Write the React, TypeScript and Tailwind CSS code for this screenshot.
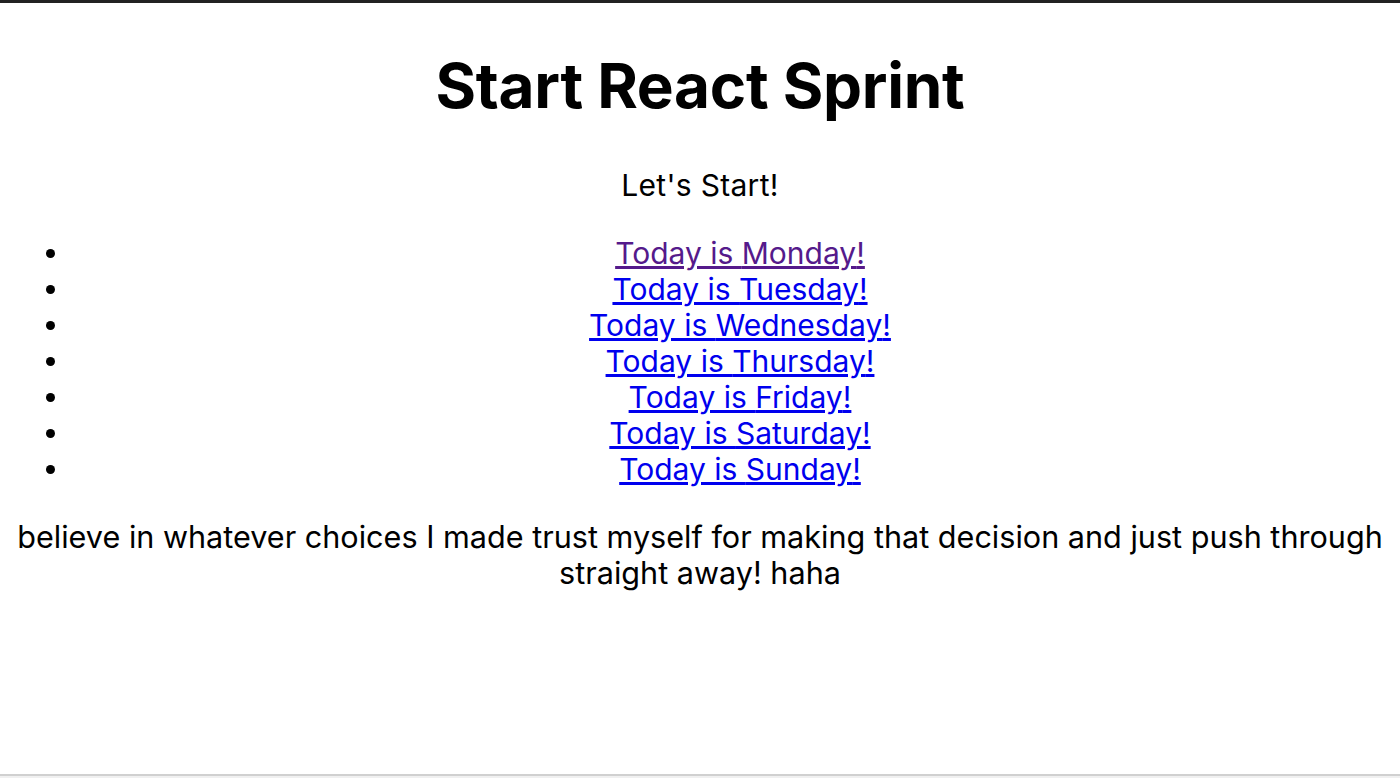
export default function App() {
  const days = ["Monday", "Tuesday", "Wednesday", "Thursday", "Friday", "Saturday", "Sunday"];

  return (
    <div className="flex h-[778px] flex-col bg-white font-['Inter',sans-serif] text-black">
      <div className="h-[3px] bg-[#222222]" />
      <main className="flex-1 overflow-hidden text-center text-[30px] leading-[36px]">
        <h1 className="mt-[45px] text-[62px] font-bold leading-[75px] tracking-[-0.3px]">Start React Sprint</h1>
        <p className="mt-[44px] tracking-[0.3px]">Let's Start!</p>
        <ul className="mt-[32px]">
          {days.map((day, i) => (
            <li key={day} className="flex items-center">
              <div className="flex w-[80px] shrink-0 pl-[46px]">
                <span className="h-[9px] w-[9px] rounded-full bg-black" />
              </div>
              <div className="flex-1 text-center">
                <a
                  href="#"
                  className={i === 0 ? "text-[#551a8b] underline" : "text-[#0000ee] underline"}
                >
                  Today is {day}!
                </a>
              </div>
            </li>
          ))}
        </ul>
        <p className="mt-[32px] text-[30.6px]">
          believe in whatever choices I made trust myself for making that decision and just push through straight away! haha
        </p>
      </main>
      <div className="h-[2px] bg-[#d0d0d0]" />
      <div className="h-[2px] bg-[#f0f0f0]" />
    </div>
  );
}
